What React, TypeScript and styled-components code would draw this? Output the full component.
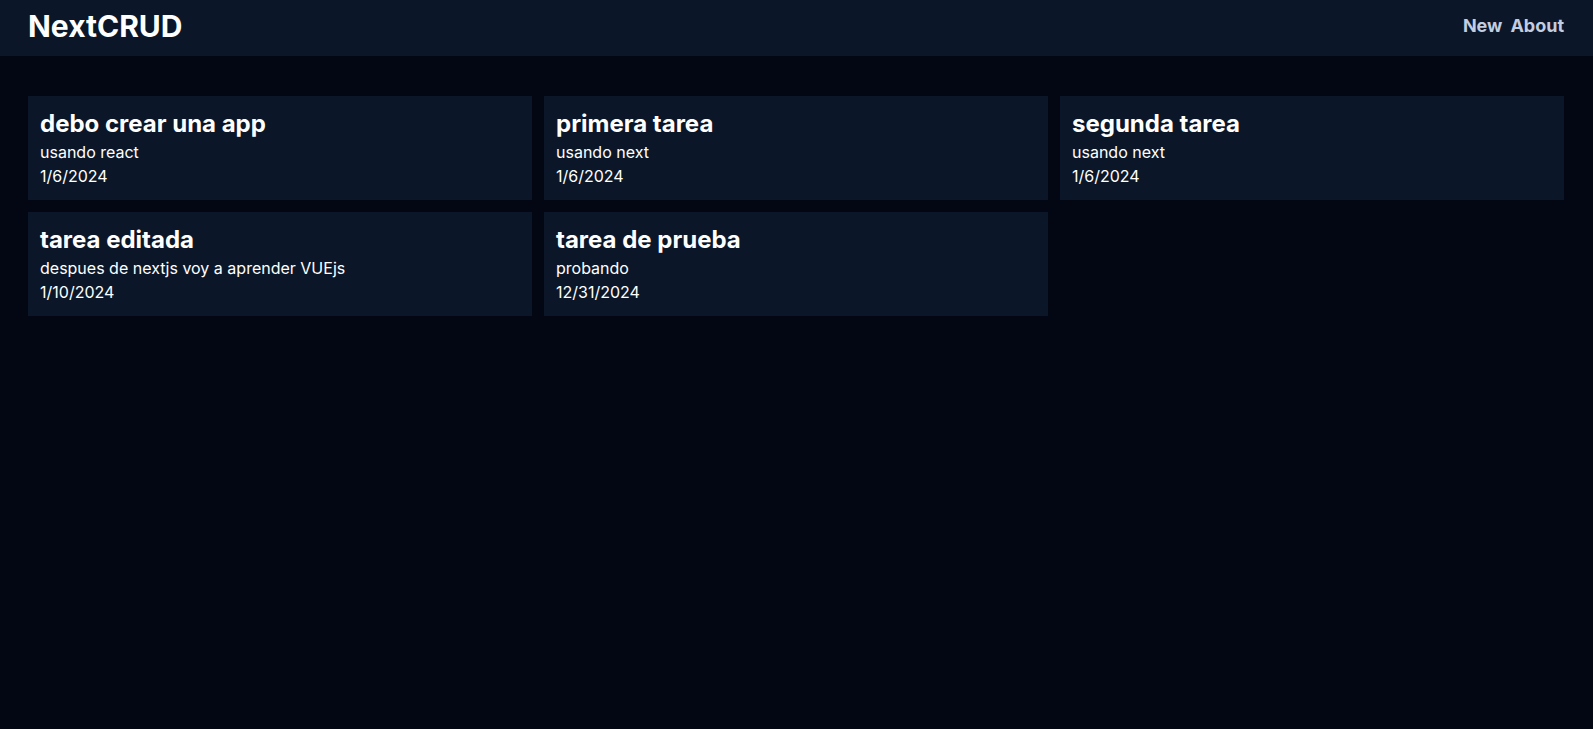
import React from "react";
import styled, { createGlobalStyle } from "styled-components";

const Global = createGlobalStyle`
  html, body { margin: 0; padding: 0; }
  body {
    background: #020713;
    color: #ffffff;
    font-family: Inter, "Noto Sans", sans-serif;
    min-height: 100vh;
  }
  * { box-sizing: border-box; }
`;

const Nav = styled.nav`
  background: #0b1729;
  padding: 0 29px 0 28px;
`;

const NavInner = styled.div`
  height: 56px;
  padding-bottom: 4px;
  display: flex;
  align-items: center;
  justify-content: space-between;
`;

const Brand = styled.h1`
  margin: 0;
  font-size: 30px;
  line-height: 36px;
  font-weight: 700;
  color: #ffffff;
`;

const Links = styled.ul`
  list-style: none;
  margin: 0;
  padding: 0;
  display: flex;
  gap: 8px;
`;

const LinkItem = styled.li`
  font-size: 18px;
  line-height: 28px;
  font-weight: 700;
  color: #c3cde0;
`;

const Main = styled.main`
  padding: 40px 29px 0 28px;
`;

const Grid = styled.div`
  display: grid;
  grid-template-columns: repeat(3, 1fr);
  gap: 12px;
`;

const Card = styled.div`
  background: #0b1729;
  padding: 12px;
`;

const Title = styled.h3`
  margin: 0;
  font-size: 24px;
  line-height: 32px;
  font-weight: 700;
`;

const Line = styled.p`
  margin: 0;
  font-size: 16px;
  line-height: 24px;
`;

const tasks = [
  { title: "debo crear una app", desc: "usando react", date: "1/6/2024" },
  { title: "primera tarea", desc: "usando next", date: "1/6/2024" },
  { title: "segunda tarea", desc: "usando next", date: "1/6/2024" },
  { title: "tarea editada", desc: "despues de nextjs voy a aprender VUEjs", date: "1/10/2024" },
  { title: "tarea de prueba", desc: "probando", date: "12/31/2024" },
];

export default function App() {
  return (
    <>
      <Global />
      <Nav>
        <NavInner>
          <Brand>NextCRUD</Brand>
          <Links>
            <LinkItem>New</LinkItem>
            <LinkItem>About</LinkItem>
          </Links>
        </NavInner>
      </Nav>
      <Main>
        <Grid>
          {tasks.map((t) => (
            <Card key={t.title}>
              <Title>{t.title}</Title>
              <Line>{t.desc}</Line>
              <Line>{t.date}</Line>
            </Card>
          ))}
        </Grid>
      </Main>
    </>
  );
}
